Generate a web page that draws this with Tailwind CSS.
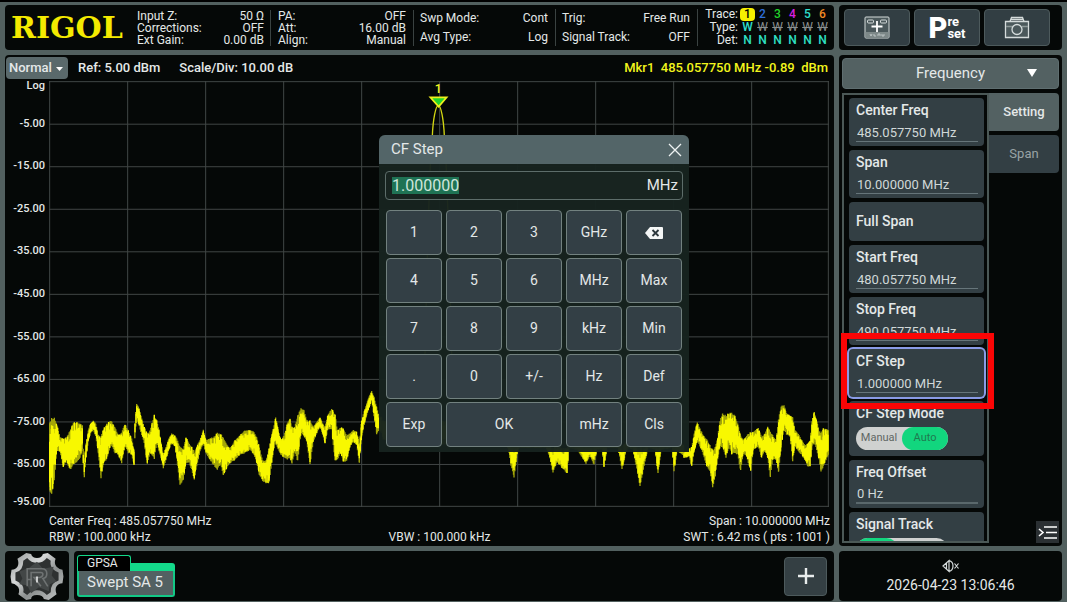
<!DOCTYPE html>
<html lang="en">
<head>
<meta charset="utf-8">
<title>RIGOL Spectrum Analyzer</title>
<script src="https://cdn.jsdelivr.net/npm/@tailwindcss/browser@4"></script>
</head>
<body class="bg-[#52605f] font-['Roboto',sans-serif] text-[#e4e8e8]">
<div class="flex h-screen min-h-[560px] flex-col gap-[5px] border-t-2 border-black px-[5px] pt-[3px] pb-px">

  <!-- Top bar -->
  <header class="flex h-[45px] flex-none gap-[5px]">
    <section class="flex min-w-0 flex-1 items-center rounded bg-[#050807] text-[12px] leading-[12px]">
      <div class="w-[126px] flex-none pl-[6px] font-['DejaVu_Serif',serif] text-[30px] leading-[36px] font-bold text-[#f4ea00]">RIGOL</div>
      <dl class="grid w-[140px] flex-none grid-cols-[auto_auto] justify-between border-r border-[#3a4241] pl-[6px] pr-[6px]">
        <dt>Input Z:</dt><dd class="text-right">50 Ω</dd>
        <dt>Corrections:</dt><dd class="text-right">OFF</dd>
        <dt>Ext Gain:</dt><dd class="text-right">0.00 dB</dd>
      </dl>
      <dl class="grid w-[143px] flex-none grid-cols-[auto_auto] justify-between border-r border-[#3a4241] pl-[7px] pr-[7px]">
        <dt>PA:</dt><dd class="text-right">OFF</dd>
        <dt>Att:</dt><dd class="text-right">16.00 dB</dd>
        <dt>Align:</dt><dd class="text-right">Manual</dd>
      </dl>
      <dl class="grid w-[142px] flex-none grid-cols-[auto_auto] justify-between gap-y-[7px] border-r border-[#3a4241] py-[3px] pl-[6px] pr-[7px]">
        <dt>Swp Mode:</dt><dd class="text-right">Cont</dd>
        <dt>Avg Type:</dt><dd class="text-right">Log</dd>
      </dl>
      <dl class="grid w-[142px] flex-none grid-cols-[auto_auto] justify-between gap-y-[7px] border-r border-[#3a4241] py-[3px] pl-[6px] pr-[7px]">
        <dt>Trig:</dt><dd class="text-right">Free Run</dd>
        <dt>Signal Track:</dt><dd class="text-right">OFF</dd>
      </dl>
      <table class="ml-auto mr-[4px] text-center leading-[13px]">
        <tr><th class="pr-[2px] text-right font-normal">Trace:</th><td class="w-[15px] rounded-sm bg-[#f6f000] font-medium text-black">1</td><td class="w-[15px] font-medium text-[#2f6fd8]">2</td><td class="w-[15px] font-medium text-[#22d32a]">3</td><td class="w-[15px] font-medium text-[#d81fe0]">4</td><td class="w-[15px] font-medium text-[#2fe0d0]">5</td><td class="w-[15px] font-medium text-[#f08a24]">6</td></tr>
        <tr><th class="pr-[2px] text-right font-normal">Type:</th><td class="font-medium text-[#2fe0d0]">W</td><td class="text-[#8a8f8f] line-through">W</td><td class="text-[#8a8f8f] line-through">W</td><td class="text-[#8a8f8f] line-through">W</td><td class="text-[#8a8f8f] line-through">W</td><td class="text-[#8a8f8f] line-through">W</td></tr>
        <tr class="font-medium text-[#2fe0c4]"><th class="pr-[2px] text-right font-normal text-[#e4e8e8]">Det:</th><td>N</td><td>N</td><td>N</td><td>N</td><td>N</td><td>N</td></tr>
      </table>
    </section>
    <nav class="flex w-[223px] flex-none gap-[4px] rounded bg-[#050807] py-[4px] pl-[5px] pr-[12px]">
      <button aria-label="Menu" class="flex flex-1 items-center justify-center rounded-sm border border-[#4d5a5c] bg-[#323e43]">
        <svg class="h-[24px] w-[26px]" viewBox="0 0 26 24" fill="none" stroke="#d5dbdb"><rect x="1" y="1" width="24" height="21" rx="1" fill="#4b585b"/><rect x="1.5" y="16" width="23" height="6" fill="#7d8888" stroke="none"/><rect x="3.500" y="4" width="6" height="3" rx="1"/><rect x="16.500" y="4" width="6" height="3" rx="1"/><path d="M13 5v11M7.500 10.500h11" stroke="#fff" stroke-width="1.800"/><path d="M6 18l1 2 1-2M10 18v2h2M14 20v-2h2v2M18 18v2h2v-2" stroke="#c9d0d0" stroke-width=".8"/></svg>
      </button>
      <button aria-label="Preset" class="flex flex-1 items-center justify-center rounded-sm border border-[#4d5a5c] bg-[#323e43] text-white">
        <span class="text-[29px] leading-[28px] font-black">P</span><span class="flex flex-col text-left text-[13px] leading-[12px] font-bold"><span>re</span><span>set</span></span>
      </button>
      <button aria-label="Screenshot" class="flex flex-1 items-center justify-center rounded-sm border border-[#4d5a5c] bg-[#323e43]">
        <svg class="h-[24px] w-[26px]" viewBox="0 0 26 24" fill="none" stroke="#d5dbdb" stroke-width="1.300"><path d="M1.500 5.500h23v16h-23z" fill="#4b585b"/><path d="M2 10.500h7M18 10.500h6" stroke="#8d9898"/><path d="M6 5.500l1.500-4h11l1.500 4M7 3.500h12"/><circle cx="13" cy="13.500" r="5"/></svg>
      </button>
    </nav>
  </header>

  <!-- Display and menu -->
  <main class="flex min-h-0 flex-1 gap-[5px]">
    <section class="relative flex min-w-0 flex-1 flex-col rounded bg-[#050807]">
      <div class="flex h-[26px] flex-none items-center pr-[6px] text-[13px] font-medium">
        <div class="relative ml-px h-[22px] w-[62px] flex-none">
          <select aria-label="Display mode" class="block h-full w-full appearance-none rounded-sm bg-[#5a696b] pl-[3px] text-[13px] leading-[20px] font-medium"><option>Normal</option></select>
          <svg class="pointer-events-none absolute top-[10px] right-[5px] h-[4px] w-[7px]" viewBox="0 0 7 4"><path d="M0 0h7L3.500 4z" fill="#fff"/></svg>
        </div>
        <span class="ml-[10px]">Ref: 5.00 dBm</span>
        <span class="ml-[19px]">Scale/Div: 10.00 dB</span>
        <span class="ml-auto text-[#f2f51c]">Mkr1&nbsp; 485.057750 MHz -0.89 &nbsp;dBm</span>
      </div>
      <div class="flex min-h-0 flex-1 pr-[5px]">
        <div class="flex w-[44px] flex-none flex-col pr-[4px] text-right text-[11px] leading-[10px] font-medium">
          <span class="flex-1">Log</span>
          <span class="flex flex-2 items-center justify-end">-5.00</span>
          <span class="flex flex-2 items-center justify-end">-15.00</span>
          <span class="flex flex-2 items-center justify-end">-25.00</span>
          <span class="flex flex-2 items-center justify-end">-35.00</span>
          <span class="flex flex-2 items-center justify-end">-45.00</span>
          <span class="flex flex-2 items-center justify-end">-55.00</span>
          <span class="flex flex-2 items-center justify-end">-65.00</span>
          <span class="flex flex-2 items-center justify-end">-75.00</span>
          <span class="flex flex-2 items-center justify-end">-85.00</span>
          <span class="flex flex-1 items-end justify-end">-95.00</span>
        </div>
        <svg class="block h-full min-w-0 flex-1" viewBox="0 0 2340 1278" preserveAspectRatio="none" fill="none">
          <path id="grid" stroke="#414645" stroke-width="3"/>
          <path d="M1150 165C1152 115 1160 74 1168 74S1184 115 1186 165C1195 240 1200 500 1210 900M1150 165C1140 240 1136 500 1126 900" stroke="#d2d612" stroke-width="4"/>
          <path d="M1144 49h49l-24 28z" fill="#22d32a" stroke="#eef01c" stroke-width="5"/>
          <text x="1168" y="36" text-anchor="middle" font-size="37" font-weight="500" fill="#f2f51c">1</text>
          <g id="trace"></g>
        </svg>
      </div>
      <div class="grid flex-none grid-cols-3 pt-[6px] pr-[4px] pb-px pl-[44px] text-[12px] leading-[16px]">
        <span class="col-span-2">Center Freq : 485.057750 MHz</span><span class="text-right whitespace-nowrap">Span : 10.000000 MHz</span>
        <span>RBW : 100.000 kHz</span><span class="text-center">VBW : 100.000 kHz</span><span class="text-right whitespace-nowrap">SWT : 6.42 ms ( pts : 1001 )</span>
      </div>

      <!-- Keypad dialog -->
      <div role="dialog" aria-label="CF Step" class="absolute top-[80px] left-[374px] w-[310px] rounded-t-md bg-[#17231f]/97 pb-[5px] text-[14px]">
        <div class="flex h-[29px] items-center justify-between rounded-t-md bg-[#536568] pr-[7px] pl-[12px] text-[15px]">
          <h2>CF Step</h2>
          <button aria-label="Close"><svg class="h-[14px] w-[14px]" viewBox="0 0 14 14" stroke="#eef2f2" stroke-width="1.300"><path d="M1 1l12 12M13 1L1 13"/></svg></button>
        </div>
        <label class="mx-[6px] mt-[7px] flex h-[29px] items-center justify-between rounded-sm border border-[#5d6d6a] bg-[#182420] pr-[4px] pl-[6px] text-[15px]">
          <input aria-label="CF Step value" value="1.000000" class="field-sizing-content bg-[#1f7354] text-[16px] leading-[17px] text-[#cfe6dc] outline-none">
          <span>MHz</span>
        </label>
        <div class="grid auto-rows-[45px] grid-cols-5 gap-x-[4px] gap-y-[3px] px-[7px] pt-[10px] *:rounded-[4px] *:border *:border-[#72817f] *:bg-[#333f45]">
          <button>1</button><button>2</button><button>3</button><button>GHz</button>
          <button aria-label="Backspace" class="flex items-center justify-center"><svg class="h-[12px] w-[18px]" viewBox="0 0 18 12"><path d="M5 0h12a1 1 0 0 1 1 1v10a1 1 0 0 1-1 1H5L0 6z" fill="#f4f6f6"/><path d="M7.500 3l6 6M13.500 3l-6 6" stroke="#2c373c" stroke-width="1.800"/></svg></button>
          <button>4</button><button>5</button><button>6</button><button>MHz</button><button>Max</button>
          <button>7</button><button>8</button><button>9</button><button>kHz</button><button>Min</button>
          <button>.</button><button>0</button><button>+/-</button><button>Hz</button><button>Def</button>
          <button>Exp</button><button class="col-span-2">OK</button><button>mHz</button><button>Cls</button>
        </div>
      </div>
    </section>

    <aside class="flex w-[223px] flex-none flex-col gap-[4px] rounded bg-[#050807] p-[3px]">
      <div class="relative h-[31px] flex-none">
        <select aria-label="Menu page" class="block h-full w-full appearance-none rounded-sm border border-[#5f6e70] bg-[#536162] text-center text-[15px] [text-align-last:center]"><option>Frequency</option></select>
        <svg class="pointer-events-none absolute top-[11px] right-[22px] h-[8px] w-[10px]" viewBox="0 0 10 8"><path d="M0 0h10L5 8z" fill="#fff"/></svg>
      </div>
      <div class="flex min-h-0 flex-1">
        <div class="relative w-[147px] flex-none border-2 border-[#4b5856]">
          <div class="flex h-full flex-col gap-[4px] overflow-hidden pt-[3px] pr-[3px] pl-[5px] text-[14px] *:flex-none *:rounded-sm *:bg-[#333f44] *:pl-[7px]">
            <label class="block h-[48px] pt-[3px] pr-[6px] leading-[18px] font-medium">Center Freq<input value="485.057750 MHz" class="mt-[4px] block h-[19px] w-full border-b border-[#66757a] pl-[1px] text-[13px] font-normal text-[#d0d8d8]"></label>
            <label class="block h-[48px] pt-[3px] pr-[6px] leading-[18px] font-medium">Span<input value="10.000000 MHz" class="mt-[4px] block h-[19px] w-full border-b border-[#66757a] pl-[1px] text-[13px] font-normal text-[#d0d8d8]"></label>
            <button class="h-[39px] text-left font-medium">Full Span</button>
            <label class="block h-[48px] pt-[3px] pr-[6px] leading-[18px] font-medium">Start Freq<input value="480.057750 MHz" class="mt-[4px] block h-[19px] w-full border-b border-[#66757a] pl-[1px] text-[13px] font-normal text-[#d0d8d8]"></label>
            <label class="block h-[48px] pt-[3px] pr-[6px] leading-[18px] font-medium">Stop Freq<input value="490.057750 MHz" class="mt-[4px] block h-[19px] w-full border-b border-[#66757a] pl-[1px] text-[13px] font-normal text-[#d0d8d8]"></label>
            <label class="block h-[48px] pt-[3px] pr-[6px] leading-[18px] font-medium ring-2 ring-[#8a9be6]">CF Step<input value="1.000000 MHz" class="mt-[4px] block h-[19px] w-full border-b border-[#66757a] pl-[1px] text-[13px] font-normal text-[#d0d8d8]"></label>
            <fieldset class="h-[55px] pt-[3px]">
              <legend class="float-left mb-[5px] w-full leading-[18px] font-medium">CF Step Mode</legend>
              <div class="clear-both flex h-[23px] w-[92px] rounded-full bg-[#cfd1d0] text-[11px] leading-[22px] text-[#5f6664]">
                <label class="flex-1 text-center"><input type="radio" name="mode" class="sr-only">Manual</label>
                <label class="flex-1 rounded-full bg-[#12d67e] text-center text-[#1f7a50]"><input type="radio" name="mode" checked class="sr-only">Auto</label>
              </div>
            </fieldset>
            <label class="block h-[48px] pt-[3px] pr-[6px] leading-[18px] font-medium">Freq Offset<input value="0 Hz" class="mt-[4px] block h-[19px] w-full border-b-2 border-[#5a686c] pl-[1px] text-[13px] font-normal text-[#d0d8d8]"></label>
            <fieldset class="h-[55px] pt-[3px]">
              <legend class="float-left mb-[5px] w-full leading-[18px] font-medium">Signal Track</legend>
              <div class="clear-both flex h-[23px] w-[92px] rounded-full bg-[#cfd1d0]">
                <label class="w-[42px] rounded-full bg-[#12d67e]"><input type="radio" name="track" aria-label="On" checked class="sr-only"></label>
                <label class="flex-1"><input type="radio" name="track" aria-label="Off" class="sr-only"></label>
              </div>
            </fieldset>
          </div>
          <!-- Highlight box around CF Step -->
          <div class="pointer-events-none absolute top-[238px] -left-[3px] h-[76px] w-[153px] border-6 border-[#fb0505]"></div>
        </div>
        <div class="flex flex-1 flex-col gap-[4px] text-[13px]">
          <button class="h-[38px] rounded-r-sm bg-[#536162] font-medium">Setting</button>
          <button class="h-[38px] rounded-r-sm bg-[#333f44] text-[#99a3a4]">Span</button>
          <button aria-label="Collapse menu" class="mt-auto ml-auto flex h-[22px] w-[23px] items-center justify-center bg-[#2b3033]"><svg class="h-[14px] w-[19px]" viewBox="0 0 19 14" fill="none" stroke="#fff" stroke-width="1.600"><path d="M1 4l4 3.500L1 11M6 2h13M8 7.500h11M6 13h13"/></svg></button>
        </div>
      </div>
    </aside>
  </main>

  <!-- Bottom bar -->
  <footer class="flex h-[50px] flex-none gap-[5px]">
    <button aria-label="System" class="flex w-[64px] flex-none items-center justify-center rounded bg-[#050807]">
      <svg class="h-[49px] w-[56px]" viewBox="0 0 56 50">
        <defs><linearGradient id="steel" x1="0" y1="0" x2="1" y2="1"><stop offset="0" stop-color="#8f9393"/><stop offset=".35" stop-color="#d6d8d8"/><stop offset=".6" stop-color="#8b8f8f"/><stop offset="1" stop-color="#c4c7c7"/></linearGradient></defs>
        <path d="M17 1l5 1q1 4 6 4t6-4l5-1 8 6q-2 5 1 8t6 3l1 7-1 7q-4 0-6 3t0 8l-8 6-5-1q-1-4-7-4t-6 4l-5 1-8-6q2-5-1-8t-6-3L1 25l1-7q4 0 6-3T8 7z" fill="url(#steel)"/>
        <path d="M18 6q4 5 10 5t10-5l4 3q-1 5 2 8t6 4v8q-4 1-6 4t-2 8l-4 3q-4-5-10-5t-10 5l-4-3q1-5-2-8t-6-4v-8q4-1 6-4t2-8z" fill="#2e3131"/>
        <path d="M10 20l10-4 8-6 6 7 11-2-2 9 5 6-7 3-1 7-10-4-8 6-4-8-8-1 3-6z" fill="#434747"/>
        <path d="M18 35V17h15q5 0 5 5t-4 5l5 8M22 35V21h10q2 0 2 2t-3 3h-6l7 9M18 28h5" fill="none" stroke="#6f7373" stroke-width="1.600"/>
        <path d="M28 25v6" stroke="#eceeee" stroke-width="1.600"/>
      </svg>
    </button>
    <section class="flex min-w-0 flex-1 items-center rounded bg-[#050807] pr-[7px] pl-[3px]">
      <button class="flex h-[42px] w-[98px] flex-col text-left">
        <span class="flex w-full flex-none items-end">
          <span class="h-[16px] w-[54px] flex-none rounded-t-[3px] border border-b-0 border-[#13d98a] bg-black pl-[9px] text-[12px] leading-[15px]">GPSA</span>
          <span class="h-[8px] flex-1 rounded-tr-[3px] bg-[#13d98a]"></span>
        </span>
        <span class="w-full flex-1 rounded-b-[3px] border-2 border-t-0 border-[#13c886] bg-[#536162] pl-[8px] text-[15px] leading-[23px]">Swept SA 5</span>
      </button>
      <button aria-label="Add" class="ml-auto flex h-[39px] w-[43px] items-center justify-center rounded-sm border border-[#4d5a5c] bg-[#343f43]"><svg class="h-[16px] w-[16px]" viewBox="0 0 16 16" stroke="#e8ecec" stroke-width="2.400"><path d="M8 0v16M0 8h16"/></svg></button>
    </section>
    <section class="flex w-[223px] flex-none flex-col items-center justify-center gap-[2px] rounded bg-[#050807] pt-[2px]">
      <svg role="img" aria-label="Muted" class="h-[14px] w-[18px]" viewBox="0 0 18 14" fill="none" stroke="#d5dbdb" stroke-width="1.200"><path d="M1 7l6-5.500v11zM7 1.500q4 1 4 5.500t-4 5.500M4.500 4v6M12.500 4.500l4 5M16.500 4.500l-4 5"/></svg>
      <time class="text-[14px] leading-[20px]">2026-04-23 13:06:46</time>
    </section>
  </footer>
</div>

<script>
// Graticule: ten divisions each way
let g = '';
for (let i = 0; i <= 10; i++) {
  const x = Math.min(2338, 2 + i * 234), y = Math.min(1276, 2 + i * 127.6);
  g += `M${x} 0V1278M0 ${y}H2340`;
}
document.getElementById('grid').setAttribute('d', g);

// Noise floor envelope: x, top, bottom; each segment has its own origin and scale
const segments = [
  {dx: -147, dy: 897, k: 1, p: [148,130,330,155,110,350,163,110,300,170,130,215,180,170,215,190,175,262,200,170,245,210,150,272,220,128,255,230,122,250,240,128,235,247,135,210,250,220,250,253,235,292,258,190,235,265,150,185,272,130,160,280,122,150,287,130,170,295,165,220,303,170,295,310,145,255,320,130,240,333,120,195,345,140,220,355,165,225,365,155,250,375,132,200,385,150,220,395,175,225,402,210,255,405,130,160,410,70,120,418,85,140,425,115,165,433,140,190,442,160,255,450,150,220,457,125,230,463,103,240,470,120,190,478,150,215,485,200,245,490,225,265,498,200,240,505,180,215,515,160,190,525,165,200,533,180,260,540,200,318,550,205,300,558,170,250,568,190,250,575,200,270,583,215,300,590,200,260,600,180,215,610,148,190,618,180,220,630,175,240,640,170,255,652,158,270,662,160,255,670,170,290,680,190,265,690,205,250,705,180,240,720,165,225,735,150,220,750,150,210,762,155,225,770,170,250,778,200,285,788,240,305,798,240,310,808,200,310,815,160,250,820,145,215,827,110,190,835,150,210,843,180,225,852,165,235,862,130,240,870,115,235,876,140,255,884,140,215,893,105,245,903,82,160,912,90,170,920,120,185,930,120,255,940,140,185,950,125,160,960,112,140,968,130,165,975,140,190,983,105,150,995,85,150,1005,100,245,1012,150,240,1022,140,220,1030,145,245,1040,165,245,1050,160,200,1060,150,185,1070,155,195,1078,190,250,1085,120,170,1095,85,125,1105,55,90,1115,32,65,1122,50,110,1130,80,165,1137,110,150,1145,110,160]},
  {dx: -147, dy: -243, k: 3, p: [383,420,440,440,420,445,507,435,445,509,440,453,511,445,466,514,445,478,517,445,455,519,440,448,546,440,448,549,445,455,553,448,473,557,445,462,562,448,468,567,448,474,569,440,448,578,440,451,586,446,464,590,446,456,594,446,465,597,442,450,602,442,450,604,446,467,607,440,448,618,440,448,622,446,470,626,442,452,629,440,448,633,440,450,636,446,465,640,446,487,645,446,462,648,440,448,655,440,450,658,445,474,661,442,450,672,440,448,674,446,472,677,442,451,684,445,456]},
  {dx: 1773, dy: 897, k: 1, p: [132,215,235,148,205,230,155,200,260,163,160,215,172,125,185,180,145,200,190,165,225,200,175,260,210,195,275,218,210,322,226,200,290,233,170,240,240,120,200,248,100,205,258,105,235,268,98,200,275,98,225,285,105,220,293,130,225,302,165,275,310,180,220,320,165,230,332,155,275,340,155,210,355,143,200,365,170,235,375,160,210,383,138,235,391,150,295,398,165,240,408,180,240,416,110,280,424,75,200,432,75,150,440,100,165,450,105,170,458,110,245,465,150,200,475,160,215,485,180,225,495,195,240,503,190,260,510,180,262,516,120,200,523,92,190,530,120,210,537,150,240,543,160,275,550,145,262,558,145,240,566,150,225]}
];
let seed = 7;
const rnd = () => (seed = (seed * 16807) % 2147483647) / 2147483647;
const layer = (step, jitter, width, colour) => {
  let out = '';
  for (const s of segments) {
    const p = s.p;
    for (let i = 0; i + 5 < p.length; i += 3) {
      const x0 = p[i] * s.k + s.dx, x1 = p[i + 3] * s.k + s.dx;
      for (let x = x0; x < x1; x += step) {
        const t = (x - x0) / (x1 - x0);
        const a = (p[i + 1] + (p[i + 4] - p[i + 1]) * t) * s.k + s.dy;
        const b = (p[i + 2] + (p[i + 5] - p[i + 2]) * t) * s.k + s.dy;
        const h = b - a;
        out += `M${x.toFixed(1)} ${(a + rnd() * jitter * h).toFixed(1)}V${(b - rnd() * jitter * h).toFixed(1)}`;
      }
    }
  }
  const el = document.createElementNS('http://www.w3.org/2000/svg', 'path');
  el.setAttribute('d', out);
  el.setAttribute('stroke', colour);
  el.setAttribute('stroke-width', width);
  document.getElementById('trace').append(el);
};
layer(2.5, 0.05, 4, '#a3a608');
layer(3, 0.3, 4, '#f8f800');
</script>
</body>
</html>
